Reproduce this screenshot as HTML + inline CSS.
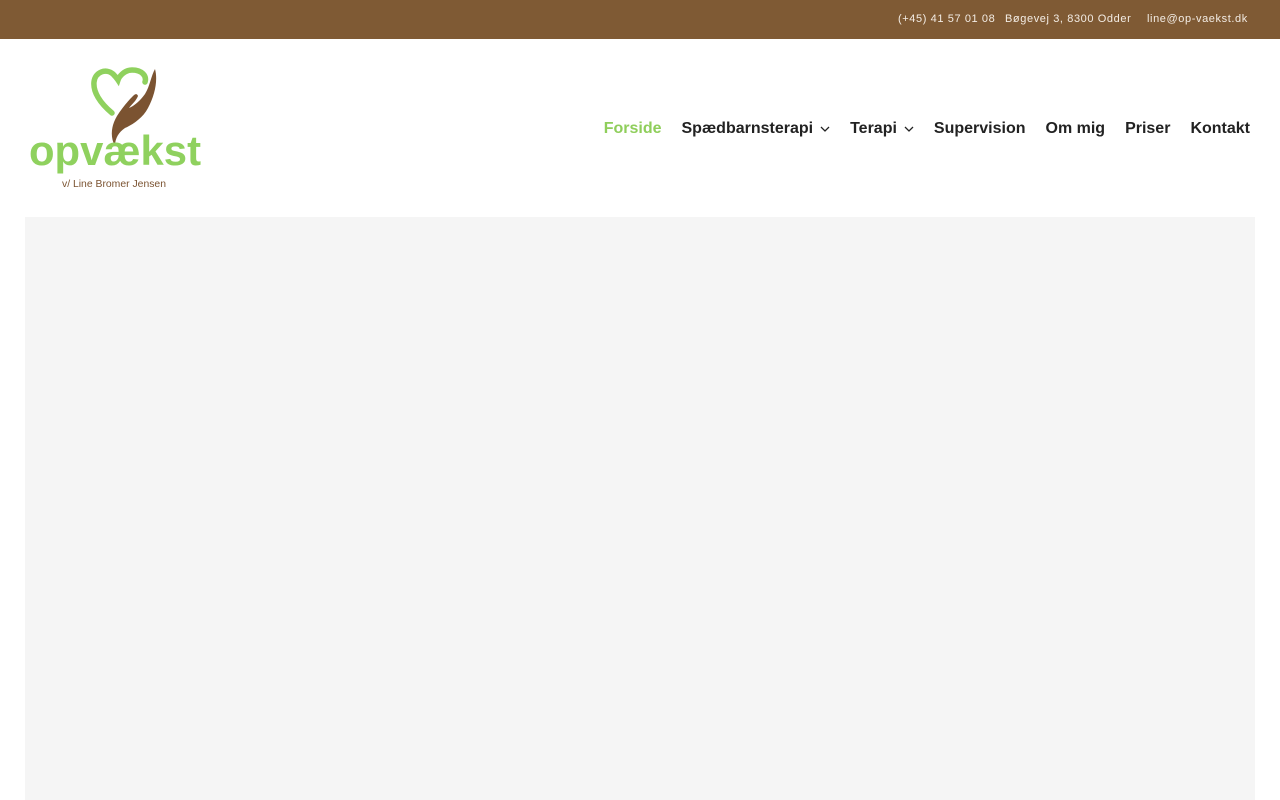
<!DOCTYPE html>
<html><head><meta charset="utf-8"><style>
*{margin:0;padding:0;box-sizing:border-box}
body{width:1280px;height:800px;background:#fff;font-family:"Liberation Sans",sans-serif;overflow:hidden;position:relative}
.top{height:39px;background:#7f5a34;color:#f3ece4;font-size:11px;letter-spacing:.6px;position:relative}
.top span{position:absolute;top:13px}
.nav{position:absolute;top:120px;right:30px;display:flex;font-size:16px;font-weight:bold;color:#222}
.nav div{margin-left:20px;display:flex;align-items:center}
.nav .act{color:#8fce5b}
.nav svg{margin-left:7px}
.hero{position:absolute;left:25px;top:217px;width:1230px;height:583px;background:#f5f5f5}
</style></head><body>
<div class="top">
<span style="left:898px">(+45) 41 57 01 08</span>
<span style="left:1005px">Bøgevej 3, 8300 Odder</span>
<span style="left:1147px">line@op-vaekst.dk</span>
</div>
<svg style="position:absolute;left:0;top:0" width="230" height="200">
<path d="M112 113 C100 103 93 92 94 82 C95 72 106 68 113 74 C116 77 118 80 118 80 C119 77 124 70 132 70 C142 70 147 76 145 82" fill="none" stroke="#8fd15e" stroke-width="5.5" stroke-linecap="round"/>
<path d="M155 69 C158 80 155 95 148 108 C143 118 132 125 125 128 C119 132 115 138 115 146 C110 137 111 126 117 116 C122 108 128 101 133 96 C135 94 137 93 138 96 C136 101 132 104 129 108 C134 106 140 101 145 94 C150 86 151 76 155 69 Z" fill="#7b5331"/>
<text x="29" y="165" font-family="Liberation Sans,sans-serif" font-size="42" font-weight="bold" fill="#8fd15e" textLength="172" lengthAdjust="spacingAndGlyphs">opvækst</text>
<text x="62" y="187" font-family="Liberation Sans,sans-serif" font-size="10.5" fill="#7b5331" textLength="104" lengthAdjust="spacingAndGlyphs">v/ Line Bromer Jensen</text>
</svg>
<div class="nav">
<div class="act">Forside</div>
<div>Spædbarnsterapi<svg width="10" height="6"><path d="M1 1l4 4 4-4" fill="none" stroke="#222" stroke-width="1.3"/></svg></div>
<div>Terapi<svg width="10" height="6"><path d="M1 1l4 4 4-4" fill="none" stroke="#222" stroke-width="1.3"/></svg></div>
<div>Supervision</div>
<div>Om mig</div>
<div>Priser</div>
<div>Kontakt</div>
</div>
<div class="hero"></div>
</body></html>
